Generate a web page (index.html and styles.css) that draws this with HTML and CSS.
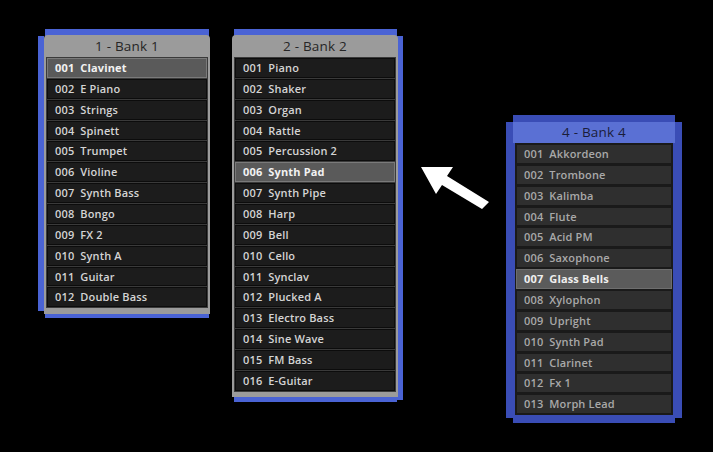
FILE: index.html
```html
<!DOCTYPE html>
<html>
<head>
<meta charset="utf-8">
<link rel="stylesheet" href="styles.css">
</head>
<body>
<div class="canvas">
  <div class="bank bank-1">
    <div class="bank-title">1 - Bank 1</div>
    <ul class="list">
      <li class="row selected"><span class="num">001</span><span>Clavinet</span></li>
      <li class="row"><span class="num">002</span><span>E Piano</span></li>
      <li class="row"><span class="num">003</span><span>Strings</span></li>
      <li class="row"><span class="num">004</span><span>Spinett</span></li>
      <li class="row"><span class="num">005</span><span>Trumpet</span></li>
      <li class="row"><span class="num">006</span><span>Violine</span></li>
      <li class="row"><span class="num">007</span><span>Synth Bass</span></li>
      <li class="row"><span class="num">008</span><span>Bongo</span></li>
      <li class="row"><span class="num">009</span><span>FX 2</span></li>
      <li class="row"><span class="num">010</span><span>Synth A</span></li>
      <li class="row"><span class="num">011</span><span>Guitar</span></li>
      <li class="row"><span class="num">012</span><span>Double Bass</span></li>
    </ul>
  </div>

  <div class="bank bank-2">
    <div class="bank-title">2 - Bank 2</div>
    <ul class="list">
      <li class="row"><span class="num">001</span><span>Piano</span></li>
      <li class="row"><span class="num">002</span><span>Shaker</span></li>
      <li class="row"><span class="num">003</span><span>Organ</span></li>
      <li class="row"><span class="num">004</span><span>Rattle</span></li>
      <li class="row"><span class="num">005</span><span>Percussion 2</span></li>
      <li class="row selected"><span class="num">006</span><span>Synth Pad</span></li>
      <li class="row"><span class="num">007</span><span>Synth Pipe</span></li>
      <li class="row"><span class="num">008</span><span>Harp</span></li>
      <li class="row"><span class="num">009</span><span>Bell</span></li>
      <li class="row"><span class="num">010</span><span>Cello</span></li>
      <li class="row"><span class="num">011</span><span>Synclav</span></li>
      <li class="row"><span class="num">012</span><span>Plucked A</span></li>
      <li class="row"><span class="num">013</span><span>Electro Bass</span></li>
      <li class="row"><span class="num">014</span><span>Sine Wave</span></li>
      <li class="row"><span class="num">015</span><span>FM Bass</span></li>
      <li class="row"><span class="num">016</span><span>E-Guitar</span></li>
    </ul>
  </div>

  <svg class="arrow" width="713" height="452" viewBox="0 0 713 452">
    <polygon points="421,167 453,167 447,176 489,202 482,209 442,185 436,194" fill="#ffffff"/>
  </svg>

  <div class="bank bank-4">
    <div class="bank-title">4 - Bank 4</div>
    <ul class="list">
      <li class="row"><span class="num">001</span><span>Akkordeon</span></li>
      <li class="row"><span class="num">002</span><span>Trombone</span></li>
      <li class="row"><span class="num">003</span><span>Kalimba</span></li>
      <li class="row"><span class="num">004</span><span>Flute</span></li>
      <li class="row"><span class="num">005</span><span>Acid PM</span></li>
      <li class="row"><span class="num">006</span><span>Saxophone</span></li>
      <li class="row selected"><span class="num">007</span><span>Glass Bells</span></li>
      <li class="row"><span class="num">008</span><span>Xylophon</span></li>
      <li class="row"><span class="num">009</span><span>Upright</span></li>
      <li class="row"><span class="num">010</span><span>Synth Pad</span></li>
      <li class="row"><span class="num">011</span><span>Clarinet</span></li>
      <li class="row"><span class="num">012</span><span>Fx 1</span></li>
      <li class="row"><span class="num">013</span><span>Morph Lead</span></li>
    </ul>
  </div>
</div>
</body>
</html>
```

FILE: styles.css
```css
html, body {
  margin: 0;
  padding: 0;
  background: #000;
}

.canvas {
  position: relative;
  z-index: 0;
  width: 713px;
  height: 452px;
  overflow: hidden;
  background: #000;
  font-family: "Open Sans", "DejaVu Sans", sans-serif;
}

.bank {
  position: absolute;
  box-sizing: border-box;
  display: flex;
  flex-direction: column;
}

.bank::before,
.bank::after {
  content: "";
  position: absolute;
  z-index: -1;
}

.bank-title {
  height: 22px;
  line-height: 22px;
  text-align: center;
  font-size: 13.5px;
  color: #262626;
  letter-spacing: 0.2px;
}

.list {
  list-style: none;
  margin: 0 2px;
  padding: 1px;
  display: flex;
  flex-direction: column;
  gap: 1px;
  background: #3a3a3a;
}

.row {
  box-sizing: border-box;
  height: 19.87px;
  display: flex;
  align-items: center;
  gap: 6px;
  padding-left: 7px;
  padding-bottom: 1px;
  border: 1px solid #0c0c0c;
  background: #1c1c1c;
  color: #d4d4d4;
  font-size: 11px;
  font-weight: 600;
  letter-spacing: 0.15px;
}

.row.selected {
  background: #5a5a5a;
  border-color: #7a7a7a;
  color: #f2f2f2;
  font-weight: 700;
}

/* Bank 1: grey panel, blue backing offset to the left */
.bank-1 {
  left: 44px;
  top: 35px;
  width: 166px;
  height: 279px;
  background: #9b9b9b;
  border-radius: 4px 4px 0 0;
}
.bank-1::before {
  left: 1px;
  right: 1px;
  top: -6px;
  bottom: -4px;
  background: #4a63d4;
}
.bank-1::after {
  left: -6px;
  width: 6px;
  top: 1px;
  bottom: 3px;
  background: #4a63d4;
}

/* Bank 2: grey panel, blue backing offset to the right */
.bank-2 {
  left: 232px;
  top: 35px;
  width: 166px;
  height: 362px;
  background: #9b9b9b;
  border-radius: 4px 4px 0 0;
}
.bank-2::before {
  left: 2px;
  right: 1px;
  top: -6px;
  bottom: -5px;
  background: #4a63d4;
}
.bank-2::after {
  right: -5px;
  width: 6px;
  top: 1px;
  bottom: -3px;
  background: #4a63d4;
}

/* Bank 4: blue panel (drop target) */
.bank-4 {
  left: 513px;
  top: 115px;
  width: 162px;
  height: 308px;
  padding-top: 7px;
  background: #3a4db6;
}
.bank-4::before {
  left: -7px;
  right: -7px;
  top: 7px;
  bottom: 5px;
  background: #3a4db6;
}
.bank-4 .bank-title {
  height: 21px;
  line-height: 21px;
  background: #5a70d4;
  color: #1a1d3a;
}
.bank-4 .list {
  background: #1a1a1a;
}
.bank-4 .row {
  background: #2f2f2f;
  border-color: #1a1a1a;
  color: #a9a9a9;
}
.bank-4 .row.selected {
  background: #5b5b5b;
  border-color: #6e6e6e;
  color: #efefef;
}

.arrow {
  position: absolute;
  left: 0;
  top: 0;
  z-index: 2;
  pointer-events: none;
}
```
